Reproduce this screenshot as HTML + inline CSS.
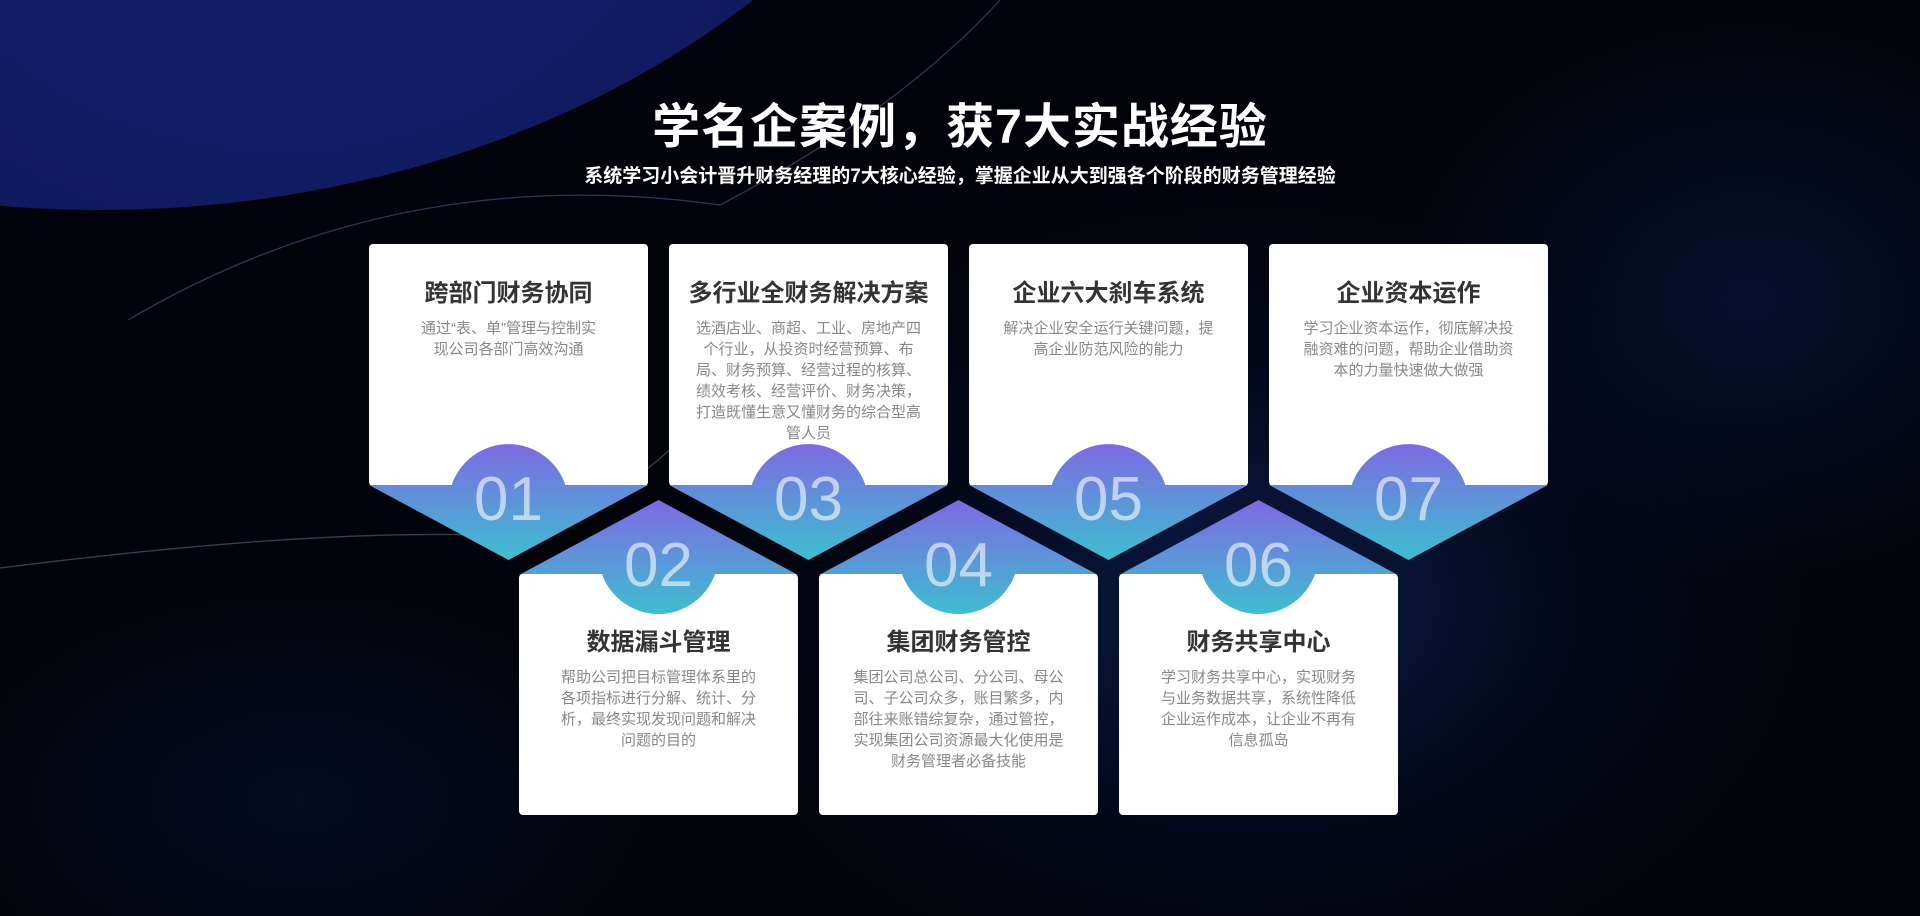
<!DOCTYPE html>
<html><head><meta charset="utf-8"><style>
html,body{margin:0;padding:0}
body{width:1920px;height:916px;position:relative;overflow:hidden;background:#02030a;font-family:"Liberation Sans","Noto Sans CJK SC",sans-serif}
.bg{position:absolute;inset:0;background:
radial-gradient(ellipse 700px 500px at 1250px 600px,rgba(20,50,130,0.5),rgba(5,15,50,0.3) 50%,transparent 80%),
radial-gradient(ellipse 500px 400px at 1750px 300px,rgba(15,40,110,0.35),transparent 70%),
radial-gradient(ellipse 500px 300px at 300px 800px,rgba(10,30,90,0.3),transparent 70%);}
.blob{position:absolute;left:-820px;top:-1210px;width:1840px;height:1420px;border-radius:50%;background:radial-gradient(ellipse at 60% 70%,#13216e,#0b1450 70%)}
h1{position:absolute;left:0;width:1920px;top:87px;margin:0;text-align:center;color:#fff;font-size:48px;font-weight:bold;letter-spacing:1px}
.sub{position:absolute;left:0;width:1920px;top:161px;text-align:center;color:#fff;font-size:19px;font-weight:bold}
.t{position:absolute;width:279px;text-align:center}
.t b{display:block;font-size:24px;color:#333;line-height:30px}
.t p{margin:9px 42px 0;font-size:15px;color:#888;line-height:21px}
svg{position:absolute;left:0;top:0}
</style></head><body>
<div class="bg"></div>
<div class="blob"></div>
<svg width="1920" height="916">
<defs>
<linearGradient id="g1" gradientUnits="userSpaceOnUse" x1="0" y1="443" x2="0" y2="560"><stop offset="0" stop-color="#7e69e2"/><stop offset="1" stop-color="#3dbfd0"/></linearGradient>
<linearGradient id="g2" gradientUnits="userSpaceOnUse" x1="0" y1="500" x2="0" y2="615"><stop offset="0" stop-color="#7e69e2"/><stop offset="1" stop-color="#3dbfd0"/></linearGradient>
</defs>
<path d="M128 320 Q400 160 720 205 Q900 110 1000 0" stroke="#4a4a70" stroke-width="1.3" fill="none" opacity=".7"/>
<path d="M0 568 Q300 530 480 535 Q600 520 680 440" stroke="#55556a" stroke-width="1.3" fill="none" opacity=".7"/>
<g>
<rect x="369" y="244" width="279" height="242" rx="4" fill="#fff"/><path d="M369 485H648L508.5 560Z" fill="url(#g1)"/><path d="M451.3 486A60 60 0 0 1 565.7 486Z" fill="url(#g1)"/>
<rect x="669" y="244" width="279" height="242" rx="4" fill="#fff"/><path d="M669 485H948L808.5 560Z" fill="url(#g1)"/><path d="M751.3 486A60 60 0 0 1 865.7 486Z" fill="url(#g1)"/>
<rect x="969" y="244" width="279" height="242" rx="4" fill="#fff"/><path d="M969 485H1248L1108.5 560Z" fill="url(#g1)"/><path d="M1051.3 486A60 60 0 0 1 1165.7 486Z" fill="url(#g1)"/>
<rect x="1269" y="244" width="279" height="242" rx="4" fill="#fff"/><path d="M1269 485H1548L1408.5 560Z" fill="url(#g1)"/><path d="M1351.3 486A60 60 0 0 1 1465.7 486Z" fill="url(#g1)"/>
</g>
<g>
<path d="M658.5 500L798 575H519Z" fill="url(#g2)"/><rect x="519" y="574" width="279" height="241" rx="4" fill="#fff"/><path d="M601.6 573A60 60 0 0 0 715.4 573Z" fill="url(#g2)"/>
<path d="M958.5 500L1098 575H819Z" fill="url(#g2)"/><rect x="819" y="574" width="279" height="241" rx="4" fill="#fff"/><path d="M901.6 573A60 60 0 0 0 1015.4 573Z" fill="url(#g2)"/>
<path d="M1258.5 500L1398 575H1119Z" fill="url(#g2)"/><rect x="1119" y="574" width="279" height="241" rx="4" fill="#fff"/><path d="M1201.6 573A60 60 0 0 0 1315.4 573Z" fill="url(#g2)"/>
</g>
<g font-family="Liberation Sans,sans-serif" font-size="62" fill="#fff" fill-opacity=".6" text-anchor="middle">
<text x="508.5" y="520">01</text><text x="808.5" y="520">03</text><text x="1108.5" y="520">05</text><text x="1408.5" y="520">07</text>
<text x="658.5" y="586">02</text><text x="958.5" y="586">04</text><text x="1258.5" y="586">06</text>
</g>
</svg>
<h1>学名企案例，获7大实战经验</h1>
<div class="sub">系统学习小会计晋升财务经理的7大核心经验，掌握企业从大到强各个阶段的财务管理经验</div>
<div class="t" style="left:369px;top:279px"><b>跨部门财务协同</b><p style="margin:9px 40px 0">通过“表、单”管理与控制实<br>现公司各部门高效沟通</p></div>
<div class="t" style="left:669px;top:279px"><b>多行业全财务解决方案</b><p style="margin:9px 26px 0">选酒店业、商超、工业、房地产四个行业，从投资时经营预算、布局、财务预算、经营过程的核算、绩效考核、经营评价、财务决策，打造既懂生意又懂财务的综合型高管人员</p></div>
<div class="t" style="left:969px;top:279px"><b>企业六大刹车系统</b><p style="margin:9px 34px 0">解决企业安全运行关键问题，提高企业防范风险的能力</p></div>
<div class="t" style="left:1269px;top:279px"><b>企业资本运作</b><p style="margin:9px 34px 0">学习企业资本运作，彻底解决投融资难的问题，帮助企业借助资本的力量快速做大做强</p></div>
<div class="t" style="left:519px;top:628px"><b>数据漏斗管理</b><p>帮助公司把目标管理体系里的各项指标进行分解、统计、分析，最终实现发现问题和解决问题的目的</p></div>
<div class="t" style="left:819px;top:628px"><b>集团财务管控</b><p style="margin:9px 34px 0">集团公司总公司、分公司、母公司、子公司众多，账目繁多，内部往来账错综复杂，通过管控，实现集团公司资源最大化使用是财务管理者必备技能</p></div>
<div class="t" style="left:1119px;top:628px"><b>财务共享中心</b><p>学习财务共享中心，实现财务与业务数据共享，系统性降低企业运作成本，让企业不再有信息孤岛</p></div>
</body></html>
